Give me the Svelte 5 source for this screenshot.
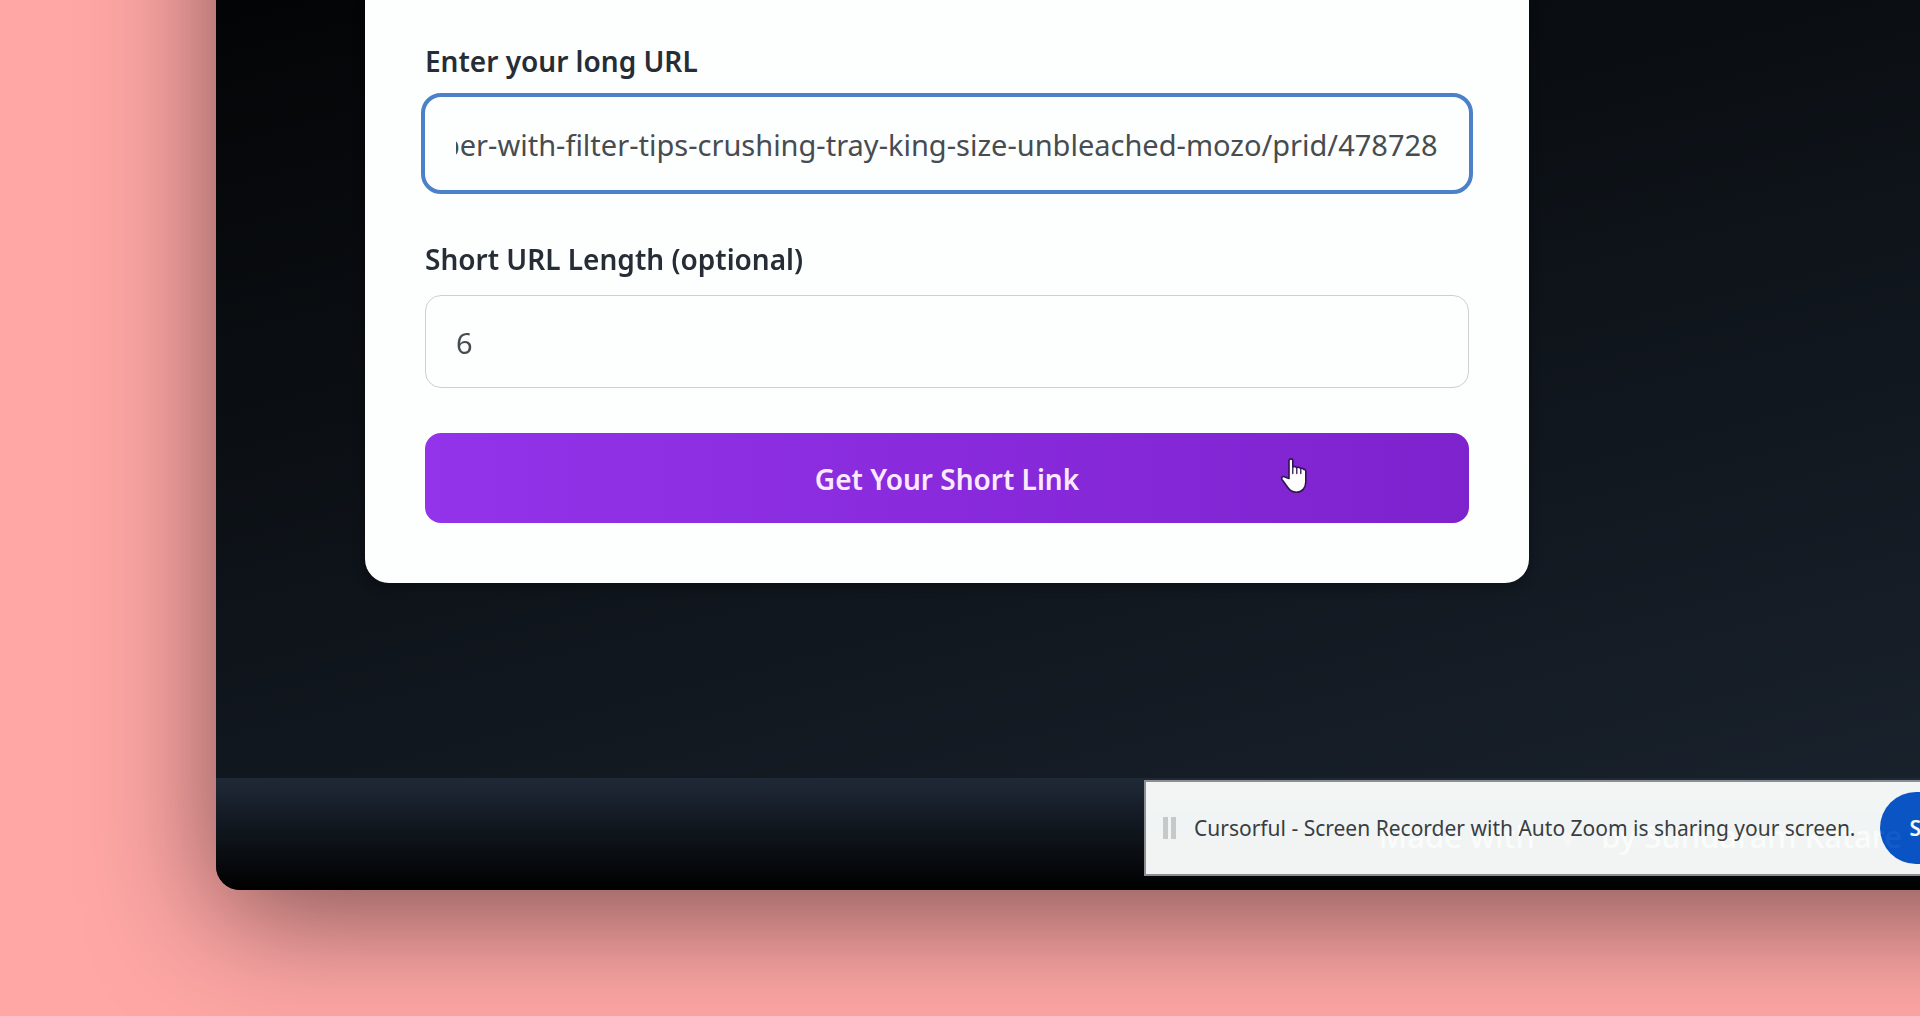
<script>
  let longUrl = 'https://www.example.com/smoking/rolling-paper-with-filter-tips-crushing-tray-king-size-unbleached-mozo/prid/478728'
  let length = '6'

  // keep the end of the address in view, as after pasting it
  function showEnd(node) {
    node.focus({ preventScroll: true })
    node.setSelectionRange(node.value.length, node.value.length)
    requestAnimationFrame(() => {
      node.scrollLeft = node.scrollWidth
    })
  }

  function submit(e) {
    e.preventDefault()
  }
</script>

<style>
  :global(body) {
    background: #fea7a5;
  }

  .stage {
    position: relative;
    display: flex;
    min-height: 100vh;
    box-sizing: border-box;
    padding: 0 0 126px 216px;
    overflow: hidden;
    font-family: "Noto Sans", "Open Sans", sans-serif;
  }

  /* the window runs past the top and right edges of the stage */
  .window {
    flex: 1;
    display: flex;
    flex-direction: column;
    justify-content: space-between;
    margin: -160px -160px 0 0;
    padding-top: 160px;
    border-radius: 24px;
    background: linear-gradient(166deg, #000, #0e1319 50%, #1b2430);
    box-shadow: 0 25px 120px rgba(0, 0, 0, 0.5);
    overflow: hidden;
  }

  .card {
    box-sizing: border-box;
    width: 68%;
    max-width: 1164px;
    margin: 0 149px;
    padding: 37px 60px 60px;
    border-radius: 0 0 24px 24px;
    background: #fdfefe;
    box-shadow: 0 4px 12px rgba(0, 0, 0, 0.3);
    display: flex;
    flex-direction: column;
  }

  label {
    margin: 4px 0 16px;
    font-size: 28px;
    line-height: 40px;
    font-weight: 600;
    color: #262d36;
  }

  input {
    box-sizing: border-box;
    width: 100%;
    height: 93px;
    margin-bottom: 45px;
    padding: 2px 30px 0;
    border: 1px solid #cdd0d0;
    border-radius: 16px;
    background: #fdfefe;
    color: #474c50;
    caret-color: transparent;
    font-family: inherit;
    font-size: 29px;
  }

  input:focus {
    border-color: transparent;
    outline: 4px solid #4c80c8;
  }

  .submit {
    height: 90px;
    padding: 2px 0 0;
    border: none;
    border-radius: 16px;
    background: linear-gradient(to right, #9333ea, #7e22ce);
    color: #fbeaff;
    font-family: inherit;
    font-size: 28px;
    font-weight: 600;
    cursor: pointer;
  }

  footer {
    display: flex;
    align-items: center;
    justify-content: flex-end;
    height: 112px;
    box-sizing: border-box;
    padding: 4px 178px 0 0;
    background: linear-gradient(#1f2937, #000);
    color: #fff;
    font-size: 31px;
    font-weight: 500;
    white-space: nowrap;
  }

  .heart {
    margin: 0 24px;
    color: #ef4444;
  }

  .sharing {
    position: absolute;
    left: 1144px;
    right: -160px;
    bottom: 140px;
    box-sizing: border-box;
    height: 96px;
    padding-left: 17px;
    display: flex;
    align-items: center;
    border: 2px solid #8d9396;
    background: #f9fcfb;
    opacity: 0.97;
    color: #3a3f42;
    font-size: 21px;
    white-space: nowrap;
  }

  .grip {
    flex: none;
    width: 3px;
    height: 22px;
    margin-right: 18px;
    border: solid #cccfcf;
    border-width: 0 5px;
  }

  .stop {
    flex: none;
    height: 72px;
    margin-left: 24px;
    padding: 0 30px;
    border: none;
    border-radius: 36px;
    background: #0a56ca;
    color: #fff;
    font-family: inherit;
    font-size: 21px;
    font-weight: 600;
  }

  .pointer {
    position: absolute;
    left: 1279px;
    top: 456px;
    width: 30px;
    height: 40px;
    pointer-events: none;
  }
</style>

<main class="stage">
  <div class="window">
    <form class="card" on:submit={submit}>
      <label for="long-url">Enter your long URL</label>
      <input id="long-url" type="text" bind:value={longUrl} use:showEnd />
      <label for="length">Short URL Length (optional)</label>
      <input id="length" type="text" bind:value={length} />
      <button class="submit">Get Your Short Link</button>
    </form>
    <footer>Made with <span class="heart">♥</span> by Sundaram Katare</footer>
  </div>

  <div class="sharing">
    <span class="grip"></span>
    <span>Cursorful - Screen Recorder with Auto Zoom is sharing your screen.</span>
    <button class="stop" type="button">Stop sharing</button>
  </div>

  <svg class="pointer" viewBox="0 0 30 40" aria-hidden="true">
    <path
      d="M10 22.500V4.800a1.900 1.900 0 0 1 3.800 0V11q2-1.200 3.800.600q2.200-1 4 .800q2-.600 3.200 1q2-.200 2 2.400V26c0 6-3.800 10.200-9.500 10.200c-4.300 0-6.500-1.700-8.700-5L3 23.500c-1.300-2 .8-3.600 2.800-2.600z"
      fill="#fff"
      stroke="#2f1450"
      stroke-width="1.600"
      stroke-linejoin="round"
    />
    <path d="M13.800 11v6.500M17.800 12v5.500M21.800 13v4.500" fill="none" stroke="#2f1450" stroke-width="1.300" stroke-linecap="round" />
  </svg>
</main>
